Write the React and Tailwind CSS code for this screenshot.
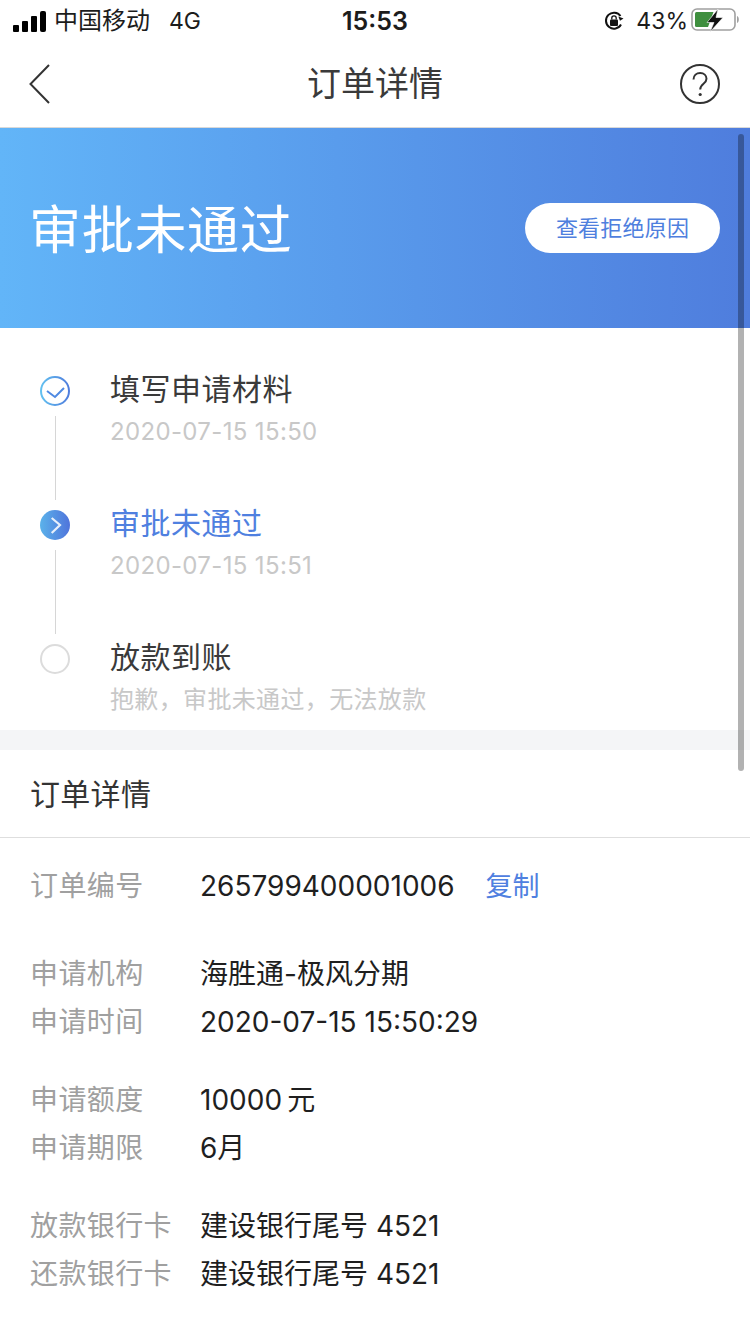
const FONT = "font-['Inter','Noto_Sans_CJK_SC',sans-serif]";

function StatusBar() {
  return (
    <div className="flex h-[42px] items-center justify-between pl-[13px] pr-[11px] text-[24px] leading-none text-[#1c1c1c]">
      <div className="flex items-center">
        <div className="flex items-end gap-[3px]">
          <span className="h-[7px] w-[6px] rounded-[1px] bg-black" />
          <span className="h-[11px] w-[6px] rounded-[1px] bg-black" />
          <span className="h-[16px] w-[6px] rounded-[1px] bg-black" />
          <span className="h-[21px] w-[6px] rounded-[2px] bg-black" />
        </div>
        <span className="ml-[8px]">中国移动</span>
        <span className="ml-[19px] text-[23px]">4G</span>
      </div>
      <span className="absolute left-0 right-0 text-center text-[25px] font-semibold">15:53</span>
      <div className="relative flex items-center">
        <svg width="22" height="22" viewBox="0 0 22 22" fill="none" className="mr-[11px]">
          <path d="M18 14.500A8 8 0 1 1 17.500 6" stroke="#111" strokeWidth="2" />
          <path d="M15 7.500h5.500L18 11z" fill="#111" transform="rotate(20 18 8)" />
          <rect x="7" y="9.500" width="8" height="6.500" rx="1" fill="#111" />
          <path d="M8.800 9.500V8a2.200 2.200 0 0 1 4.400 0v1.500" stroke="#111" strokeWidth="1.300" />
        </svg>
        <span className="text-[23px]">43%</span>
        <svg width="48" height="24" viewBox="0 0 48 24" fill="none" className="mb-[3px] ml-[3px]">
          <rect x="1" y="1" width="43" height="21" rx="5" stroke="#a0a0a0" strokeWidth="1.600" />
          <path d="M46 8c1.200.5 1.800 1.800 1.800 3.500S47.200 14.500 46 15z" fill="#a0a0a0" />
          <rect x="4" y="4" width="13" height="15" rx="1.500" fill="#3f8f3f" />
          <path d="M15 4h7.500l-5.500 15h-2z" fill="#3f8f3f" />
          <path d="M27 1 16 14.500h7L19 24 32 9.500h-7z" fill="#111" stroke="#fff" strokeWidth="0.600" />
        </svg>
      </div>
    </div>
  );
}

function NavBar() {
  return (
    <div className="relative flex h-[86px] items-center justify-center border-b border-[#d9d9d9] pb-[1px]">
      <svg width="24" height="42" viewBox="0 0 24 42" fill="none" className="absolute left-[28px] top-[21px]">
        <path d="M21 2 2.500 21 21 40" stroke="#333" strokeWidth="2" />
      </svg>
      <span className="text-[34px] leading-none text-[#3a3a3a]">订单详情</span>
      <svg width="42" height="42" viewBox="0 0 42 42" fill="none" className="absolute right-[29px] top-[21px]">
        <circle cx="21" cy="21" r="19" stroke="#333" strokeWidth="2" />
        <path d="M14.500 16.500c0-4 3-6.500 6.700-6.500s6.300 2.500 6.300 5.800c0 5.200-6.300 4.700-6.300 10.700" stroke="#333" strokeWidth="2" />
        <circle cx="21.200" cy="31.500" r="1.600" fill="#333" />
      </svg>
    </div>
  );
}

function Hero() {
  return (
    <div className="flex h-[200px] items-center justify-between bg-gradient-to-r from-[#62b5f8] to-[#4f7ddd] pl-[29px] pr-[30px]">
      <span className="pt-[5px] text-[52px] leading-none tracking-[0.7px] text-white">审批未通过</span>
      <button className="flex h-[50px] w-[195px] items-center justify-center rounded-full bg-white text-[22px] tracking-[0.2px] text-[#4f7fde]">
        查看拒绝原因
      </button>
    </div>
  );
}

function StepIcon({ type }) {
  if (type === "done") {
    return (
      <svg width="30" height="30" viewBox="0 0 30 30" fill="none">
        <defs>
          <linearGradient id="doneRing" x1="0" y1="0" x2="1" y2="0">
            <stop offset="0" stopColor="#62c0f0" />
            <stop offset="1" stopColor="#4f7ddd" />
          </linearGradient>
        </defs>
        <circle cx="15" cy="15" r="14" stroke="url(#doneRing)" strokeWidth="2" />
        <path d="M7 15 15 21 24 12" stroke="#4f8ae2" strokeWidth="2" />
      </svg>
    );
  }
  if (type === "current") {
    return (
      <svg width="30" height="30" viewBox="0 0 30 30" fill="none">
        <defs>
          <linearGradient id="currentDot" x1="0" y1="0" x2="1" y2="0">
            <stop offset="0" stopColor="#5bb2ea" />
            <stop offset="1" stopColor="#4f74db" />
          </linearGradient>
        </defs>
        <circle cx="15" cy="15" r="15" fill="url(#currentDot)" />
        <path d="M11.700 8 20 15 11.700 23" stroke="#e8f0fb" strokeWidth="2.200" />
      </svg>
    );
  }
  return <div className="h-[30px] w-[30px] rounded-full border-2 border-[#dcdcdc]" />;
}

function Step({ type, title, sub, last }) {
  return (
    <div className="flex h-[134px] pl-[40px]">
      <div className="flex w-[30px] flex-col items-center">
        <StepIcon type={type} />
        {!last && <div className="mt-[10px] h-[84px] w-px bg-[#d6d6d6]" />}
      </div>
      <div className="ml-[40px] -mt-[7px]">
        <div className={`text-[30px] leading-[40px] tracking-[0.5px] ${type === "current" ? "text-[#4f80e0]" : "text-[#3a3a3a]"}`}>{title}</div>
        <div className="mt-[8px] text-[24px] leading-[30px] tracking-[0.35px] text-[#c8c8c8]">{sub}</div>
      </div>
    </div>
  );
}

function Row({ label, value, extra, className = "" }) {
  return (
    <div className={`flex h-[48px] items-center pl-[30px] text-[28px] leading-none ${className}`}>
      <span className="w-[170px] tracking-[0.4px] text-[#a0a0a0]">{label}</span>
      <span className="text-[#1f1f1f]">{value}</span>
      {extra && <span className="ml-[31px] text-[27px] text-[#4f80e0]">{extra}</span>}
    </div>
  );
}

export default function App() {
  return (
    <div className={`relative h-[1334px] w-[750px] overflow-hidden bg-white ${FONT}`}>
      <StatusBar />
      <NavBar />
      <Hero />
      <div className="h-[402px] pt-[48px]">
        <Step type="done" title="填写申请材料" sub="2020-07-15 15:50" />
        <Step type="current" title="审批未通过" sub="2020-07-15 15:51" />
        <Step type="todo" title="放款到账" sub="抱歉，审批未通过，无法放款" last />
      </div>
      <div className="h-[20px] bg-[#f4f5f7]" />
      <div className="flex h-[88px] items-center border-b border-[#dedede] pl-[30px] text-[30px] leading-none tracking-[0.3px] text-[#333]">订单详情</div>
      <div className="pt-[24px]">
        <Row label="订单编号" value="265799400001006" extra="复制" />
        <Row label="申请机构" value="海胜通-极风分期" className="mt-[40px]" />
        <Row label="申请时间" value="2020-07-15 15:50:29" />
        <Row label="申请额度" value={"10000\u2009元"} className="mt-[30px]" />
        <Row label="申请期限" value="6月" />
        <Row label="放款银行卡" value="建设银行尾号 4521" className="mt-[30px]" />
        <Row label="还款银行卡" value="建设银行尾号 4521" />
      </div>
      <div className="absolute left-[738px] top-[134px] h-[637px] w-[6px] rounded-full bg-black/30" />
    </div>
  );
}
